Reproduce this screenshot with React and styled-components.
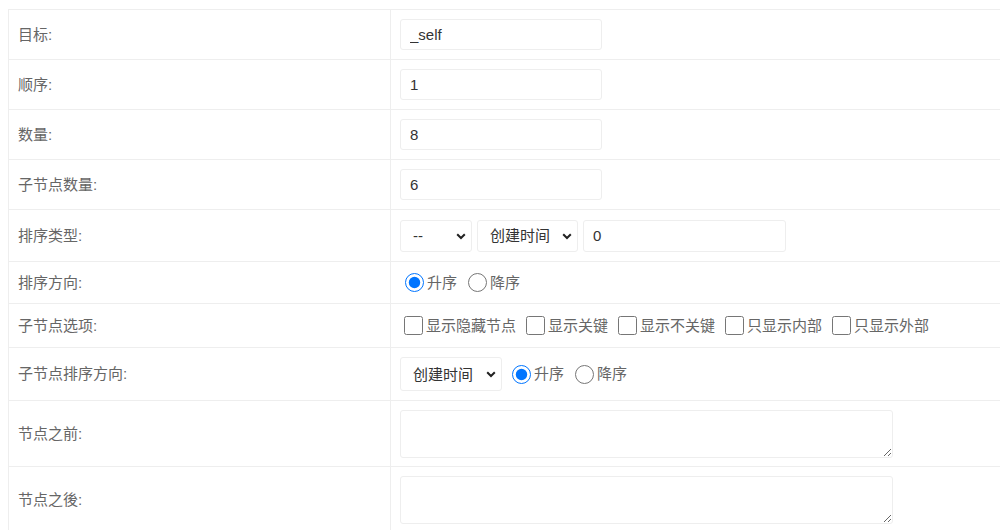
import React from "react";
import styled, { createGlobalStyle } from "styled-components";

const GlobalStyle = createGlobalStyle`
  html, body {
    margin: 0;
    padding: 0;
    background: #fff;
    overflow: hidden;
  }
  body {
    font-family: "Liberation Sans", "Noto Sans CJK SC", sans-serif;
    font-size: 15px;
    color: #333;
  }
`;

const Page = styled.div`
  padding: 9px 0 0 8px;
`;

const Table = styled.div`
  width: 1010px;
  border-top: 1px solid #eee;
  border-left: 1px solid #eee;
`;

const Row = styled.div`
  display: grid;
  grid-template-columns: 382px 1fr;
  height: ${(p) => p.$h}px;
  box-sizing: border-box;
  border-bottom: 1px solid #eee;
`;

const Label = styled.div`
  display: flex;
  align-items: center;
  padding-left: 9px;
  border-right: 1px solid #eee;
  color: #666;
  line-height: 20px;
`;

const Field = styled.div`
  display: flex;
  align-items: center;
  padding-left: 9px;
  gap: ${(p) => p.$gap || 0}px;
`;

const TextInput = styled.input`
  box-sizing: border-box;
  width: ${(p) => p.$w || 202}px;
  height: ${(p) => p.$h || 31}px;
  margin: 0;
  padding: 0 9px;
  border: 1px solid #eee;
  border-radius: 3px;
  font-family: inherit;
  font-size: 15px;
  color: #333;
  outline: none;
`;

const SelectWrap = styled.div`
  position: relative;
  width: ${(p) => p.$w}px;
  height: ${(p) => p.$h || 32}px;
  flex: none;
`;

const Select = styled.select`
  appearance: none;
  box-sizing: border-box;
  width: 100%;
  height: 100%;
  margin: 0;
  padding: 0 0 0 12px;
  border: 1px solid #eee;
  border-radius: 3px;
  background: #fff;
  font-family: inherit;
  font-size: 15px;
  color: #333;
  outline: none;
`;

const Chevron = styled.svg`
  position: absolute;
  right: 6px;
  top: 50%;
  width: 10px;
  height: 7px;
  margin-top: -3px;
  pointer-events: none;
`;

const Choices = styled.div`
  display: flex;
  align-items: center;
  gap: ${(p) => p.$gap || 6}px;
`;

const Choice = styled.label`
  display: flex;
  align-items: center;
  color: #666;
  line-height: 20px;
  white-space: nowrap;
`;

const Box = styled.input`
  width: 19px;
  height: 19px;
  margin: 0 3px 0 ${(p) => p.$ml ?? 5}px;
  flex: none;
`;

const Area = styled.textarea`
  box-sizing: border-box;
  width: 493px;
  height: 48px;
  margin: 0;
  border: 1px solid #eee;
  border-radius: 3px;
  font-family: inherit;
  font-size: 15px;
  outline: none;
`;

const Dropdown = ({ w, h, value, options }) => (
  <SelectWrap $w={w} $h={h}>
    <Select defaultValue={value}>
      {options.map((o) => (
        <option key={o}>{o}</option>
      ))}
    </Select>
    <Chevron viewBox="0 0 10 7">
      <path d="M1.2 1.2 L5 5 L8.8 1.2" fill="none" stroke="#222" strokeWidth="2" />
    </Chevron>
  </SelectWrap>
);

const Order = ({ name }) => (
  <Choices $gap={6}>
    <Choice>
      <Box type="radio" name={name} defaultChecked />
      升序
    </Choice>
    <Choice>
      <Box type="radio" name={name} />
      降序
    </Choice>
  </Choices>
);

const childOptions = ["显示隐藏节点", "显示关键", "显示不关键", "只显示内部", "只显示外部"];

export default function App() {
  return (
    <Page>
      <GlobalStyle />
      <Table>
        <Row $h={50}>
          <Label>目标:</Label>
          <Field>
            <TextInput defaultValue="_self" />
          </Field>
        </Row>
        <Row $h={50}>
          <Label>顺序:</Label>
          <Field>
            <TextInput defaultValue="1" />
          </Field>
        </Row>
        <Row $h={50}>
          <Label>数量:</Label>
          <Field>
            <TextInput defaultValue="8" />
          </Field>
        </Row>
        <Row $h={50}>
          <Label>子节点数量:</Label>
          <Field>
            <TextInput defaultValue="6" />
          </Field>
        </Row>
        <Row $h={52}>
          <Label>排序类型:</Label>
          <Field $gap={5}>
            <Dropdown w={72} value="--" options={["--", "名称"]} />
            <Dropdown w={101} value="创建时间" options={["创建时间", "修改时间"]} />
            <TextInput $w={203} $h={32} defaultValue="0" />
          </Field>
        </Row>
        <Row $h={42}>
          <Label>排序方向:</Label>
          <Field>
            <Order name="dir" />
          </Field>
        </Row>
        <Row $h={44}>
          <Label>子节点选项:</Label>
          <Field>
            <Choices $gap={6}>
              {childOptions.map((o) => (
                <Choice key={o}>
                  <Box type="checkbox" $ml={4} />
                  {o}
                </Choice>
              ))}
            </Choices>
          </Field>
        </Row>
        <Row $h={53}>
          <Label>子节点排序方向:</Label>
          <Field $gap={5}>
            <Dropdown w={102} h={34} value="创建时间" options={["创建时间", "修改时间"]} />
            <Order name="childDir" />
          </Field>
        </Row>
        <Row $h={66}>
          <Label>节点之前:</Label>
          <Field>
            <Area />
          </Field>
        </Row>
        <Row $h={66}>
          <Label>节点之後:</Label>
          <Field>
            <Area />
          </Field>
        </Row>
      </Table>
    </Page>
  );
}
